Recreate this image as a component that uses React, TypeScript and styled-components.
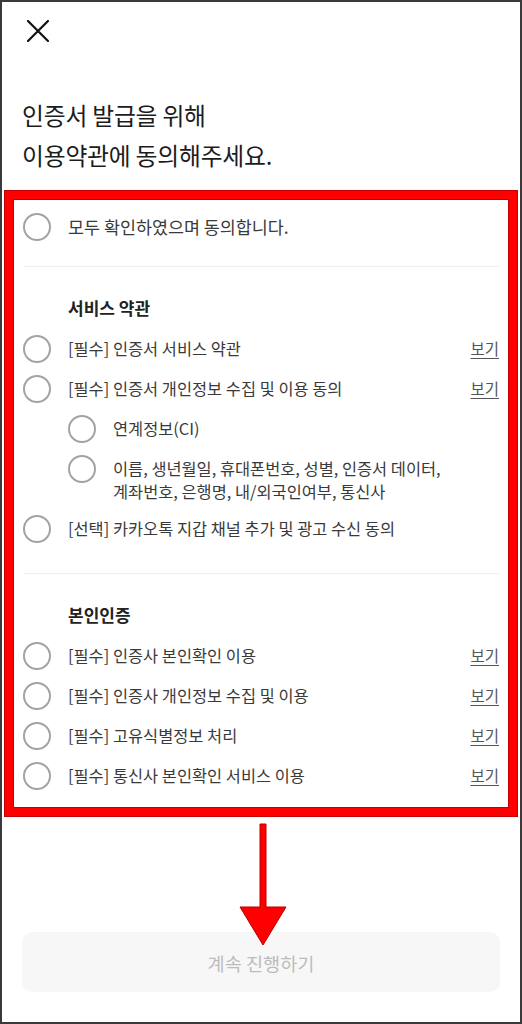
import styled, { createGlobalStyle } from 'styled-components'

const GlobalStyle = createGlobalStyle`
  * {
    box-sizing: border-box;
  }

  body {
    margin: 0;
    background: #fff;
    font-family: 'Noto Sans CJK KR', 'Noto Sans', sans-serif;
    -webkit-font-smoothing: antialiased;
  }
`

const Frame = styled.div`
  position: relative;
  width: 522px;
  height: 1024px;
  border: 2px solid #3a3a3a;
  background: #fff;
  display: flex;
  flex-direction: column;
  overflow: hidden;
`

const Header = styled.header`
  height: 42px;
  padding: 18px 0 0 25px;
  display: flex;
  align-items: flex-start;
`

const CloseButton = styled.button`
  width: 22px;
  height: 22px;
  padding: 0;
  border: none;
  background: none;
  color: #111;
  display: block;
`

const Title = styled.h1`
  margin: 51px 0 0;
  padding-left: 20px;
  font-size: 23.8px;
  font-weight: 400;
  line-height: 40px;
  color: #1c1c1c;
  letter-spacing: -0.2px;
`

const Highlight = styled.section`
  margin: 16px 3px 0;
  border: 8px solid #ff0000;
  box-shadow: 0 0 0 1px #c40000, inset 0 0 0 1px #c40000;
  padding: 8px 10px 12px;
`

const Row = styled.div<{ $indent?: boolean }>`
  display: flex;
  align-items: flex-start;
  padding: 6px 0 6px ${(p) => (p.$indent ? '45px' : '0')};
`

const Circle = styled.span`
  flex: none;
  width: 28px;
  height: 28px;
  border-radius: 50%;
  border: 2px solid #a3a3a3;
`

const Label = styled.span<{ $large?: boolean }>`
  flex: 1;
  margin: 2px 0 0 17px;
  font-size: ${(p) => (p.$large ? '17.4px' : '16.4px')};
  line-height: 23px;
  color: #3a3a3a;
  word-break: keep-all;
`

const ViewLink = styled.a`
  flex: none;
  margin-top: 2px;
  font-size: 15.5px;
  line-height: 23px;
  color: #555;
  text-decoration: underline;
  text-underline-offset: 3px;
  text-decoration-thickness: 1px;
`

const Divider = styled.hr<{ $gap: number }>`
  margin: ${(p) => p.$gap}px 0 0;
  border: none;
  height: 1px;
  background: #efefef;
`

const SectionTitle = styled.h2`
  margin: 29px 0 9px;
  padding-left: 45px;
  font-size: 17px;
  font-weight: 700;
  line-height: 24px;
  color: #222;
`

const SubmitButton = styled.button`
  margin: 116px 20px 0;
  height: 60px;
  border: none;
  border-radius: 10px;
  background: #f7f7f7;
  font-family: inherit;
  font-size: 18.6px;
  color: #bcbcbc;
`

const ArrowMark = styled.svg`
  position: absolute;
  left: 234px;
  top: 818px;
`

type Term = {
  label: string
  link?: boolean
  indent?: boolean
}

const serviceTerms: Term[] = [
  { label: '[필수] 인증서 서비스 약관', link: true },
  { label: '[필수] 인증서 개인정보 수집 및 이용 동의', link: true },
  { label: '연계정보(CI)', indent: true },
  {
    label: '이름, 생년월일, 휴대폰번호, 성별, 인증서 데이터, 계좌번호, 은행명, 내/외국인여부, 통신사',
    indent: true,
  },
  { label: '[선택] 카카오톡 지갑 채널 추가 및 광고 수신 동의' },
]

const identityTerms: Term[] = [
  { label: '[필수] 인증사 본인확인 이용', link: true },
  { label: '[필수] 인증사 개인정보 수집 및 이용', link: true },
  { label: '[필수] 고유식별정보 처리', link: true },
  { label: '[필수] 통신사 본인확인 서비스 이용', link: true },
]

const TermRow = ({ label, link, indent }: Term) => (
  <Row $indent={indent}>
    <Circle />
    <Label>{label}</Label>
    {link && <ViewLink>보기</ViewLink>}
  </Row>
)

const App = () => {
  return (
    <>
      <GlobalStyle />
      <Frame>
        <Header>
          <CloseButton aria-label="닫기">
            <svg width="22" height="22" viewBox="0 0 22 22">
              <path d="M1 1L21 21M21 1L1 21" stroke="currentColor" strokeWidth="2.2" strokeLinecap="round" />
            </svg>
          </CloseButton>
        </Header>

        <Title>
          인증서 발급을 위해
          <br />
          이용약관에 동의해주세요.
        </Title>

        <Highlight>
          <Row>
            <Circle />
            <Label $large>모두 확인하였으며 동의합니다.</Label>
          </Row>

          <Divider $gap={19} />
          <SectionTitle>서비스 약관</SectionTitle>
          {serviceTerms.map((t) => (
            <TermRow key={t.label} {...t} />
          ))}

          <Divider $gap={24} />
          <SectionTitle>본인인증</SectionTitle>
          {identityTerms.map((t) => (
            <TermRow key={t.label} {...t} />
          ))}
        </Highlight>

        <SubmitButton>계속 진행하기</SubmitButton>

        <ArrowMark width="54" height="130" viewBox="0 0 54 130">
          <polygon
            points="24,4 30,4 30,87 50,87 27,125 4,87 24,87"
            fill="#ff0000"
            stroke="#b80000"
            strokeWidth="1"
          />
        </ArrowMark>
      </Frame>
    </>
  )
}

export default App
